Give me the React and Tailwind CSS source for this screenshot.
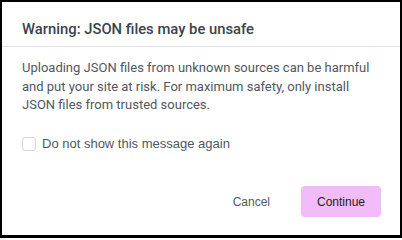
import { useState } from 'react'

// JSON upload warning dialog

export default function App() {
  const [dontShow, setDontShow] = useState(false)

  return (
    <div className="w-[402px] h-[238px] bg-black pt-[2px] pl-[2px] pr-[2px] pb-[3px]">
      <div className="flex flex-col h-full bg-white">
        {/* Header */}
        <div className="h-[45px] shrink-0 border-b border-[#e5e5e5] pl-[20px] pt-[15px]">
          <h2 className="font-['Roboto',sans-serif] text-[14.8px] leading-[24px] font-medium text-[#3c434a]">
            Warning: JSON files may be unsafe
          </h2>
        </div>

        {/* Body */}
        <div className="px-[20px] pt-[12px]">
          <p className="font-['Roboto',sans-serif] text-[13px] leading-[18.5px] text-[#50575e]">
            Uploading JSON files from unknown sources can be harmful and put your site at risk. For maximum safety, only install JSON files from trusted sources.
          </p>

          <label className="mt-[21px] flex items-center gap-[6px] cursor-pointer">
            <input
              type="checkbox"
              checked={dontShow}
              onChange={(e) => setDontShow(e.target.checked)}
              className="appearance-none w-[14px] h-[14px] rounded-[3px] border border-[#d6d6d6] bg-white"
            />
            <span className="font-['Liberation_Sans',Arial,sans-serif] text-[13px] leading-[16px] text-[#50575e]">
              Do not show this message again
            </span>
          </label>
        </div>

        {/* Footer */}
        <div className="mt-auto flex items-center justify-end gap-[15px] pr-[19px] pb-[18px]">
          <button className="h-[31px] px-[16px] font-['Liberation_Sans',Arial,sans-serif] text-[12px] text-[#50575e]">
            Cancel
          </button>
          <button className="h-[31px] w-[80px] rounded-[4px] bg-[#f2bbf9] font-['Liberation_Sans',Arial,sans-serif] text-[12px] text-[#1e1e1e]">
            Continue
          </button>
        </div>
      </div>
    </div>
  )
}
